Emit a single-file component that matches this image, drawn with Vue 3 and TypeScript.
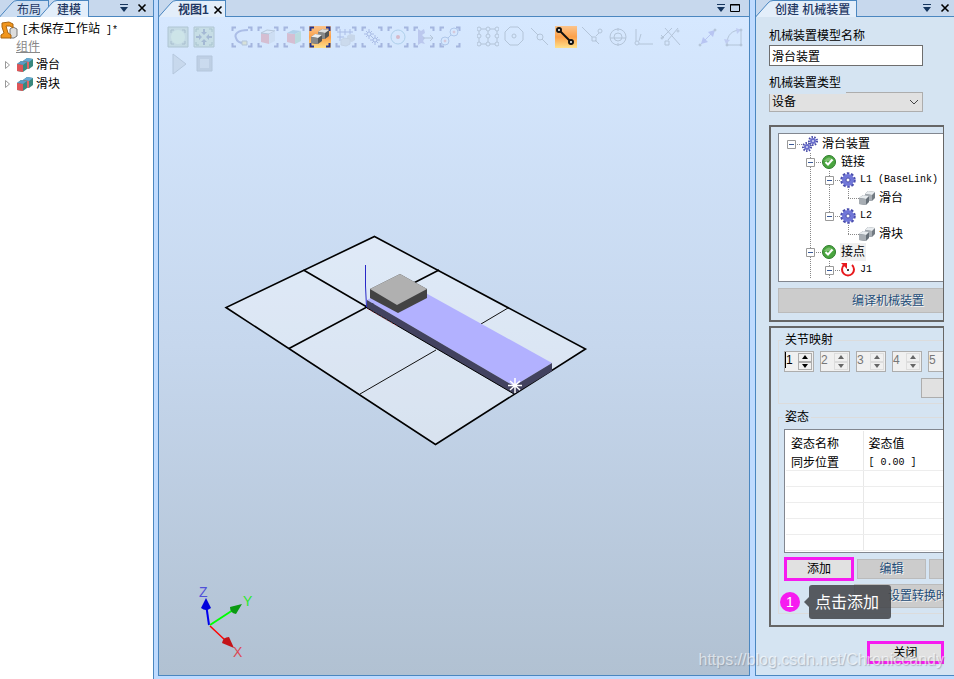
<script setup lang="ts">
import { ref } from 'vue'

interface Shape { d: string; fill?: string; stroke?: string; w?: number }
interface Tool { name: string; shapes: Shape[]; active?: boolean; corners?: boolean }
interface TreeRow { label: string; latin?: boolean; level: number; icon: string; leaf?: boolean; guides: number[]; last?: boolean; selected?: boolean }

const ring = (x: number, y: number, r: number): string =>
  `M${x - r} ${y}a${r} ${r} 0 1 0 ${r * 2} 0a${r} ${r} 0 1 0 ${-r * 2} 0`

const spokes = (x: number, y: number): string =>
  `M${x} ${y - 5}V${y - 2}M${x} ${y + 2}V${y + 5}M${x - 5} ${y}H${x - 2}M${x + 2} ${y}H${x + 5}` +
  `M${x - 3} ${y - 3}L${x - 1} ${y - 1}M${x + 1} ${y + 1}L${x + 3} ${y + 3}M${x + 3} ${y - 3}L${x + 1} ${y - 1}M${x - 1} ${y + 1}L${x - 3} ${y + 3}`

const corners = 'M1.5 5V1.5H5M17 1.5H20.5V5M20.5 17V20.5H17M5 20.5H1.5V17'
const navy = '#3c4fa8'
const grey = '#5d6b78'

const cubes: Shape[] = [
  { d: 'M9 6L13 3L20 4V10L16 13L9 12Z', fill: '#555' },
  { d: 'M9 6L13 3L20 4L16 7Z', fill: '#ddd' },
  { d: 'M9 6L16 7V13L9 12Z', fill: '#888' },
  { d: 'M2 11L6 8L13 9V15L9 18L2 17Z', fill: '#555' },
  { d: 'M2 11L6 8L13 9L9 12Z', fill: '#eee' },
  { d: 'M2 11L9 12V18L2 17Z', fill: '#888' },
]

const toolGroups: Tool[][] = [
  [
    { name: '全部显示', shapes: [{ d: 'M1 1H21V21H1Z', fill: '#98b8a0', stroke: '#4d6c64' }, { d: ring(11, 11, 7), fill: '#b8dfb0' }, { d: 'M4 7V4H7M15 4H18V7M18 15V18H15M7 18H4V15', stroke: '#355' }] },
    { name: '居中', shapes: [{ d: 'M1 1H21V21H1Z', fill: '#a0c4a4', stroke: '#4d6c64' }, { d: 'M11 3V7M11 15V19M3 11H7M15 11H19', stroke: '#233f66', w: 2 }, { d: 'M8 6H14L11 9ZM8 16H14L11 13ZM6 8V14L9 11ZM16 8V14L13 11Z', fill: '#233f66' }, { d: 'M3 6V3H6M16 3H19V6M19 16V19H16M6 19H3V16', stroke: '#365' }] },
  ],
  [
    { name: '选择曲线', corners: true, shapes: [{ d: 'M17 4C7 4 3 8 5 12C6 16 9 17 13 17', stroke: navy, w: 2 }, { d: 'M11 15H16V19H11Z', fill: '#ddd27a', stroke: grey }] },
    { name: '选择表面', corners: true, shapes: [{ d: 'M4 7L12 8V18L4 16Z', fill: '#d6545e' }, { d: 'M4 7L10 4L18 5L12 8Z', fill: '#e4e9ef', stroke: grey }, { d: 'M12 8L18 5V15L12 18Z', fill: '#b9c7d8' }] },
    { name: '选择物体', corners: true, shapes: [{ d: 'M4 7L12 8V18L4 16Z', fill: '#d6545e' }, { d: 'M4 7L10 4L18 5L12 8Z', fill: '#4e94b6' }, { d: 'M12 8L18 5V15L12 18Z', fill: '#71bc92' }] },
    { name: '选择部件', corners: true, active: true, shapes: cubes },
    { name: '选择组', corners: true, shapes: [{ d: 'M5 3V15M10 3V9M15 3V8M2 6H18M2 11H9', stroke: navy }, { d: 'M12 10L15 8L20 9V14L17 16L12 15Z', fill: '#a3aab2' }, { d: 'M6 14L9 12L15 13V18L11 20L6 19Z', fill: '#b4bbc2', stroke: '#98a0a8' }] },
    { name: '选择机械装置', corners: true, shapes: [{ d: spokes(8, 8) + ring(8, 8, 2), stroke: navy }, { d: spokes(14, 14) + ring(14, 14, 2), stroke: navy }] },
    { name: '目标选择', corners: true, shapes: [{ d: ring(11, 11, 7), stroke: '#4992b7' }, { d: ring(11, 11, 2), fill: '#dc4040' }] },
    { name: '移动选择', corners: true, shapes: [{ d: 'M5 3L8 5L11 3L12 7L9 9L12 12L10 15L12 18L8 17L5 19Z', fill: '#7778c4' }, { d: 'M10 12H20M17 9L20 12L17 15', stroke: grey }] },
    { name: '路径选择', corners: true, shapes: [{ d: ring(15, 6, 4) + ring(6, 15, 4) + 'M9 12L12 9', stroke: '#4b74b7' }, { d: ring(15, 6, 1) + ring(6, 15, 1), fill: '#dc4040', stroke: '#dc8080' }] },
  ],
  [
    { name: '捕捉对象', shapes: [{ d: ring(2, 3, 2) + ring(11, 3, 2) + ring(20, 3, 2) + ring(2, 10, 2) + ring(11, 10, 2) + ring(20, 10, 2) + ring(2, 18, 2) + ring(11, 18, 2) + ring(20, 18, 2), stroke: grey }, { d: 'M4 3H9M13 3H18M4 18H9M13 18H18M2 5V8M2 12V16M11 5V8M11 12V16M20 5V8M20 12V16', stroke: grey }] },
    { name: '捕捉中心', shapes: [{ d: 'M7 1H15L20 6V14L15 19H7L2 14V6Z', stroke: grey }, { d: ring(11, 10, 2), stroke: grey }] },
    { name: '捕捉中点', shapes: [{ d: 'M2 2L9 9M13 13L19 19', stroke: grey }, { d: ring(11, 11, 3), stroke: grey }] },
    { name: '捕捉末端', active: true, shapes: [{ d: 'M5 5L16 16', stroke: '#111', w: 2 }, { d: ring(4, 4, 2) + ring(16, 16, 2), fill: '#fff', stroke: '#111', w: 2 }] },
    { name: '捕捉边缘', shapes: [{ d: 'M1 1L11 11M14 14L18 18M15 10L18 7', stroke: grey }, { d: 'M11 11H15V15H11Z' + ring(19, 5, 2), stroke: grey }] },
    { name: '捕捉重心', shapes: [{ d: ring(11, 11, 8), stroke: grey }, { d: ring(11, 11, 4) + 'M3 12H19M11 2V5M11 17V20', stroke: grey }] },
    { name: '捕捉本地原点', shapes: [{ d: 'M3 3V15M6 18H20M6 15L8 8', stroke: grey }, { d: ring(4, 17, 2), stroke: grey }] },
    { name: '捕捉网格', shapes: [{ d: 'M6 2L21 19M19 2L9 14M2 13L13 2M2 9L5 12', stroke: grey }, { d: 'M6 15H10V19H6Z' + ring(19, 5, 1) + ring(3, 12, 1), stroke: grey }] },
  ],
  [
    { name: '点到点', shapes: [{ d: 'M4 18L18 4', stroke: '#6b6bd5' }, { d: 'M18 4L11 6L16 11ZM4 18L6 11L11 16Z', fill: '#6b6bd5' }, { d: ring(3, 19, 1) + ring(18, 4, 1), fill: grey, stroke: grey }] },
    { name: '角度', shapes: [{ d: 'M4 18C4 9 9 4 18 4V19H4', stroke: grey }, { d: 'M18 4L13 2L14 8ZM3 18L1 13L7 14Z', fill: '#8b8bd5' }, { d: ring(18, 4, 1) + ring(18, 19, 1) + ring(4, 19, 1), fill: grey, stroke: grey }] },
  ],
]

const tree: TreeRow[] = [
  { label: '滑台装置', level: 0, icon: 'gears', guides: [] },
  { label: '链接', level: 1, icon: 'check', guides: [] },
  { label: 'L1 (BaseLink)', latin: true, level: 2, icon: 'gear', guides: [1] },
  { label: '滑台', level: 3, icon: 'part', leaf: true, last: true, guides: [1, 2] },
  { label: 'L2', latin: true, level: 2, icon: 'gear', last: true, guides: [1] },
  { label: '滑块', level: 3, icon: 'part', leaf: true, last: true, guides: [1] },
  { label: '接点', level: 1, icon: 'check', guides: [], selected: true },
  { label: 'J1', latin: true, level: 2, icon: 'joint', guides: [1] },
]

const parts = ['滑台', '滑块']
const modelName = ref('滑台装置')
const modelType = ref('设备')
const joints = ref([1, 2, 3, 4, 5])
const emptyRows = 5
</script>

<template>
  <div class="app">
    <aside class="pane left">
      <header class="strip">
        <button class="tab">
          <svg class="slope" viewBox="0 0 17 17"><path class="face" d="M0 17L12 3Q14 1 17 1V17Z" /><path class="edge" d="M0 16.500L12 3Q14 .5 17 .5" /></svg>
          <span>布局</span>
        </button>
        <button class="tab on overlap">
          <svg class="slope" viewBox="0 0 17 17"><path class="face" d="M0 17L12 3Q14 1 17 1V17Z" /><path class="edge" d="M0 16.500L12 3Q14 .5 17 .5" /></svg>
          <span>建模</span>
        </button>
        <i class="fill"></i>
        <button class="ctl" aria-label="菜单"><svg viewBox="0 0 10 10"><path d="M1 1.500H9" stroke="#17365d" /><path d="M1 4H9L5 9Z" fill="#17365d" /></svg></button>
        <button class="ctl" aria-label="关闭面板"><svg viewBox="0 0 10 10"><path d="M1.500 1.500L8.500 8.500M8.500 1.500L1.500 8.500" stroke="#000" stroke-width="1.600" /></svg></button>
      </header>
      <div class="station">
        <svg class="robot" viewBox="0 0 18 18"><path d="M10 8L13 6L17 8V15L14 17H10Z" fill="#ddd" stroke="#777" /><path d="M2 2L9 1L13 3L13 7L10 5L6 5L8 12L11 14V17H1V14L4 12L2 6Z" fill="#f2961d" stroke="#a96510" /></svg>
        <span><b class="mono">[</b>未保存工作站<b class="mono"> ]*</b></span>
      </div>
      <div class="group">组件</div>
      <ul class="parts">
        <li v-for="p in parts" :key="p">
          <svg class="caret" viewBox="0 0 8 10"><path d="M1.500 1.500L5.500 5L1.500 8.500Z" fill="#fff" stroke="#999" /></svg>
          <svg class="cube" viewBox="0 0 18 16">
            <path d="M7 4L11 1L17 2V9L13 12L7 11Z" fill="#39887e" /><path d="M7 4L11 1L17 2L13 5Z" fill="#67a8d5" /><path d="M7 4L13 5V12L7 11Z" fill="#df6668" />
            <path d="M1 7L5 4L11 5V12L7 15L1 14Z" fill="#39887e" /><path d="M1 7L5 4L11 5L7 8Z" fill="#5d9ac5" /><path d="M1 7L7 8V15L1 14Z" fill="#df5558" />
          </svg>
          <span>{{ p }}</span>
        </li>
      </ul>
    </aside>

    <main class="pane center">
      <header class="strip">
        <button class="tab on bold">
          <svg class="slope" viewBox="0 0 17 17"><path class="face" d="M0 17L12 3Q14 1 17 1V17Z" /><path class="edge" d="M0 16.500L12 3Q14 .5 17 .5" /></svg>
          <span>视图1 <svg class="x" viewBox="0 0 10 10"><path d="M1.500 1.500L8.500 8.500M8.500 1.500L1.500 8.500" stroke="#000" stroke-width="1.600" /></svg></span>
        </button>
        <i class="fill"></i>
        <button class="ctl near" aria-label="菜单"><svg viewBox="0 0 10 10"><path d="M1 1.500H9" stroke="#17365d" /><path d="M1 4H9L5 9Z" fill="#17365d" /></svg></button>
        <button class="ctl" aria-label="最大化"><svg viewBox="0 0 10 10"><path d="M.5 1.500H9.500V8.500H.5ZM0 2H10" fill="none" stroke="#000" /></svg></button>
      </header>
      <div class="view">
        <svg class="scene" viewBox="159 17 590 658" preserveAspectRatio="xMinYMin meet">
          <path d="M374.500 236.500L585.500 349L435.500 444.500L226 307.500Z" fill="#fff" fill-opacity=".38" stroke="#000" stroke-width="1.600" />
          <path d="M303.500 270L367 307L289 348.500M439 270L367 307" fill="none" stroke="#000" stroke-width="1.600" />
          <path d="M508 308L481 324M436 350L360 394" stroke="#111" />
          <path d="M367 300L404 281L552 363L514 386Z" fill="#b2b1ff" />
          <path d="M367 300L514 386L552 363V371L514 394L367 308Z" fill="#42425f" />
          <path d="M367 308L514 394" stroke="#000" />
          <path d="M368 309L397 326" stroke="#d35b68" stroke-dasharray="1 2" />
          <path d="M370 289L400 274L427 289V298L398 313L370 298Z" fill="#434343" />
          <path d="M370 289L400 274L427 289L397 305Z" fill="#b0b0b0" />
          <path d="M365.500 265V286L366.500 307" stroke="#2828c8" fill="none" />
          <path d="M515 378V393M508 385.500H522M510 381L520 390M520 381L510 390" stroke="#fff" stroke-width="1.500" />
          <path d="M209 625L206 604" stroke="#00e" stroke-width="2" /><path d="M206 598L201 608Q206 612 211 608Z" fill="#0000dc" />
          <path d="M210 625L233 610" stroke="#0f0" stroke-width="2" /><path d="M242 604L230 607Q230 613 236 614Z" fill="#0a9a12" />
          <path d="M210 626L226 641" stroke="#f00" stroke-width="1.500" /><path d="M234 648L222 643Q223 637 229 637Z" fill="#c41318" />
          <text x="199" y="597" fill="#5050d8">Z</text><text x="243" y="606" fill="#2ce82c">Y</text><text x="233" y="657" fill="#dc4a55">X</text>
        </svg>
        <div class="tools">
          <div class="toolrow">
            <div v-for="(g, i) in toolGroups" :key="i" class="toolgroup">
              <button v-for="t in g" :key="t.name" class="tool" :class="{ active: t.active }" :aria-label="t.name">
                <svg viewBox="0 0 22 22">
                  <path v-if="t.corners" :d="corners" fill="none" stroke="#26368e" stroke-width="2" />
                  <path v-for="(s, k) in t.shapes" :key="k" :d="s.d" :fill="s.fill ?? 'none'" :stroke="s.stroke ?? 'none'" :stroke-width="s.w ?? 1" />
                </svg>
              </button>
            </div>
          </div>
          <div class="toolrow">
            <div class="toolgroup">
              <button class="tool" aria-label="播放"><svg viewBox="0 0 22 22"><path d="M6 1L19 11L6 21Z" fill="#a9b8c6" stroke="#66788a" /></svg></button>
              <button class="tool" aria-label="停止"><svg viewBox="0 0 22 22"><path d="M4 3H19V18H4Z" fill="#8495a6" stroke="#66788a" /><path d="M7 6H16V15H7Z" fill="#b3bfca" /></svg></button>
            </div>
          </div>
        </div>
      </div>
    </main>

    <aside class="pane right">
      <header class="strip">
        <button class="tab on create">
          <svg class="slope" viewBox="0 0 17 17"><path class="face" d="M0 17L12 3Q14 1 17 1V17Z" /><path class="edge" d="M0 16.500L12 3Q14 .5 17 .5" /></svg>
          <span>创建 机械装置</span>
        </button>
        <i class="fill"></i>
        <button class="ctl" aria-label="菜单"><svg viewBox="0 0 10 10"><path d="M1 1.500H9" stroke="#17365d" /><path d="M1 4H9L5 9Z" fill="#17365d" /></svg></button>
        <button class="ctl" aria-label="关闭面板"><svg viewBox="0 0 10 10"><path d="M1.500 1.500L8.500 8.500M8.500 1.500L1.500 8.500" stroke="#000" stroke-width="1.600" /></svg></button>
      </header>
      <div class="form">
        <label for="model-name">机械装置模型名称</label>
        <input id="model-name" v-model="modelName" class="field" type="text">
        <label for="model-type" class="second">机械装置类型</label>
        <div class="selectbox">
          <select id="model-type" v-model="modelType" class="field"><option>设备</option></select>
          <svg viewBox="0 0 10 6"><path d="M1 1L5 5L9 1" fill="none" stroke="#444" /></svg>
        </div>

        <section class="box">
          <div class="tree">
            <div v-for="r in tree" :key="r.level + r.label + r.icon" class="node">
              <svg :width="r.level * 19 + 20" height="18" class="lines">
                <g stroke="#888" stroke-dasharray="1 1">
                  <path v-for="n in r.guides" :key="n" :d="`M${n * 19 + 9.5} 0V18`" />
                  <path v-if="r.level" :d="`M${r.level * 19 + 9.5} 0V${r.last ? 9 : 18}`" />
                  <path :d="`M${r.level * 19 + 9} 9.5H${r.level * 19 + 20}`" />
                </g>
                <g v-if="!r.leaf" :transform="`translate(${r.level * 19 + 5} 5)`">
                  <path d="M.5 .5H8.500V8.500H.5Z" fill="#fff" stroke="#999" /><path d="M2 4.500H7" stroke="#3a5a98" />
                </g>
              </svg>
              <svg class="ico" viewBox="0 0 16 16">
                <template v-if="r.icon === 'check'">
                  <circle cx="8" cy="8" r="6.500" fill="#4aa53f" stroke="#2f7d2c" /><path d="M3 7Q8 0 13 7Z" fill="#7cc06e" /><path d="M4.500 8L7 10.500L11.500 5.500" fill="none" stroke="#fff" stroke-width="2" />
                </template>
                <template v-else-if="r.icon === 'gear'">
                  <circle cx="8" cy="8" r="6.500" fill="none" stroke="#4a4eae" stroke-width="2.500" stroke-dasharray="2.500 1.600" /><circle cx="8" cy="8" r="4" fill="#fff" stroke="#7177d8" stroke-width="4" /><circle cx="8" cy="8" r="2" fill="#fff" stroke="#474ba8" />
                </template>
                <template v-else-if="r.icon === 'gears'">
                  <g fill="none" stroke="#474ba8" stroke-width="2" stroke-dasharray="1.500 1.300"><circle cx="11" cy="5" r="4" /><circle cx="5" cy="11" r="4" /></g>
                  <g fill="#d9dbf5" stroke="#6a6ecb" stroke-width="2"><circle cx="11" cy="5" r="2" /><circle cx="5" cy="11" r="2" /></g>
                </template>
                <template v-else-if="r.icon === 'part'">
                  <path d="M6 4L9 1L16 2V8L13 11L6 10Z" fill="#737b83" /><path d="M6 4L9 1L16 2L13 5Z" fill="#e8ecef" /><path d="M6 4L13 5V11L6 10Z" fill="#a7adb3" /><path d="M0 8L4 5L10 6V12L7 15L0 14Z" fill="#677078" /><path d="M0 8L4 5L10 6L7 9Z" fill="#e8ecef" /><path d="M0 8L7 9V15L0 14Z" fill="#a7adb3" />
                </template>
                <template v-else>
                  <path d="M4 3A6 6 0 1 0 12 3" fill="none" stroke="#e8191c" stroke-width="2" /><path d="M1 1H7V7Z" fill="#e8191c" /><circle cx="8" cy="8" r="1" fill="#000" />
                </template>
              </svg>
              <span :class="{ mono: r.latin, selected: r.selected }">{{ r.label }}</span>
            </div>
          </div>
          <button class="btn off compile" disabled>编译机械装置</button>
        </section>

        <section class="box lower">
          <fieldset>
            <legend>关节映射</legend>
            <div class="spins">
              <div v-for="(j, i) in joints" :key="i" class="spin" :class="{ live: i === 0 }">
                <input v-model="joints[i]" type="number" :disabled="i > 0" :aria-label="`关节 ${j}`">
                <span class="arrows">
                  <button :disabled="i > 0" aria-label="增加"><svg viewBox="0 0 6 4"><path d="M0 4L3 0L6 4Z" /></svg></button>
                  <button :disabled="i > 0" aria-label="减少"><svg viewBox="0 0 6 4"><path d="M0 0L3 4L6 0Z" /></svg></button>
                </span>
              </div>
            </div>
            <button class="btn map" aria-label="设置"></button>
          </fieldset>
          <fieldset class="poses">
            <legend>姿态</legend>
            <div class="tablebox">
              <table>
                <thead><tr><th>姿态名称</th><th>姿态值</th></tr></thead>
                <tbody>
                  <tr class="data"><td>同步位置</td><td class="mono">[ 0.00 ]</td></tr>
                  <tr v-for="n in emptyRows" :key="n"><td></td><td></td></tr>
                </tbody>
              </table>
            </div>
            <div class="actions">
              <button class="btn marked add">添加</button>
              <button class="btn off edit" disabled>编辑</button>
              <button class="btn off edit" disabled aria-label="删除"></button>
            </div>
            <button class="btn off times" disabled>设置转换时</button>
            <div class="callout"><b>1</b><span>点击添加</span></div>
          </fieldset>
        </section>
        <button class="btn marked close">关闭</button>
      </div>
    </aside>
    <div class="watermark">https://blog.csdn.net/Chroniccandy</div>
  </div>
</template>

<style>
body { margin: 0; background: #bfdbff; }
</style>

<style scoped>
* { box-sizing: border-box; }
.app {
  display: grid;
  grid-template-columns: 154px minmax(0, 1fr) 199px;
  column-gap: 4px;
  min-height: 100vh;
  position: relative;
  overflow: hidden;
  background: #bfdbff;
  color: #000;
  font: 12px/18px "Liberation Sans", "Noto Sans CJK SC", sans-serif;
}
button, input, select { font: inherit; color: inherit; margin: 0; padding: 0; border-radius: 0; }
.mono { font: 10px/18px "Liberation Mono", monospace; white-space: pre; }
.pane { display: flex; flex-direction: column; min-width: 0; }
.left { background: #fff; border-right: 1px solid #4b87c0; }
.center { border: 1px solid #4b87c0; border-top: 0; margin-bottom: 3px; margin-right: 1px; }
.right { background: #d5e4f2; border-left: 1px solid #4b87c0; border-bottom: 1px solid #4b87c0; margin-bottom: 3px; }

.strip { display: flex; height: 17px; flex: none; background: linear-gradient(#4b87c0, #4b87c0) 0 100% / 100% 1px no-repeat #c7d8ed; }
.fill { flex: 1; }
.tab { display: flex; border: 0; background: none; height: 17px; color: #1f3864; line-height: 18px; --face: #cddef2; }
.tab.on { --face: #e3eefa; font-weight: 500; }
.tab.bold { font-weight: 700; }
.tab > span { background: var(--face); border-top: 1px solid #4b87c0; border-right: 1px solid #4b87c0; height: 17px; padding-right: 7px; white-space: nowrap; }
.tab:not(.on) > span { height: 16px; }
.tab.overlap { margin-left: -9px; }
.slope { width: 17px; height: 17px; flex: none; }
.face { fill: var(--face); }
.edge { fill: none; stroke: #4b87c0; }
.x { width: 10px; height: 10px; margin: 0 -6px 0 1px; vertical-align: -1px; }
.center .tab > span { padding: 0 8px 0 2px; }
.right .tab > span { padding: 0 6px 0 2px; }
.ctl { width: 18px; height: 16px; border: 0; background: none; display: grid; place-items: center; }
.ctl.near { margin-right: -4px; }
.center .ctl:last-child { margin-right: 5px; }
.left .ctl:last-child { margin-right: 2px; }
.ctl svg { width: 10px; height: 10px; }

.station { display: flex; align-items: center; gap: 4px; height: 20px; margin-top: 3px; white-space: nowrap; }
.robot { width: 18px; height: 18px; }
.station b { font-weight: 400; }
.group { padding-left: 16px; height: 15px; line-height: 15px; color: #888; text-decoration: underline; }
.parts { list-style: none; margin: 0; padding: 0; }
.parts li { display: flex; align-items: center; height: 19px; padding-left: 4px; }
.caret { width: 8px; height: 10px; margin-right: 4px; }
.cube { width: 18px; height: 16px; margin-right: 2px; }

.view { flex: 1; display: grid; background: linear-gradient(#d6e8ff, #c6d7ed 50%, #b1c1d2); }
.scene, .tools { grid-area: 1 / 1; }
.scene { width: 100%; height: 100%; display: block; }
.scene text { font: 14px "Liberation Sans", sans-serif; }
.tools { display: flex; flex-direction: column; gap: 5px; padding: 9px 0 0 8px; align-self: start; }
.toolrow { display: flex; gap: 16px; }
.toolgroup { display: flex; gap: 4px; }
.tool { width: 22px; height: 22px; border: 0; background: none; }
.tool svg { width: 22px; height: 22px; display: block; opacity: .27; }
.tool.active { background: linear-gradient(#fbc48c, #fba04a 50%, #fee08a); }
.tool.active svg { opacity: 1; }

.form { display: flex; flex-direction: column; align-items: flex-start; padding: 9px 10px 11px 13px; }
.form > label { display: block; height: 18px; line-height: 20px; margin-bottom: 1px; }
.field { width: 154px; height: 21px; border: 1px solid #6e6e6e; background: #fff; padding: 0 2px; display: block; }
.form > .second { position: relative; background: #d5e4f2; height: 21px; width: 77px; margin: 7px 0 -2px; }
.selectbox { display: grid; align-items: center; margin-bottom: 13px; }
.selectbox > * { grid-area: 1 / 1; }
.selectbox select { appearance: none; height: 20px; background: #e1e1e1; border-color: #adadad; }
.selectbox svg { width: 10px; height: 6px; justify-self: end; margin-right: 4px; pointer-events: none; }

.box { align-self: stretch; border: 2px solid #666; border-right-width: 1px; overflow: hidden; padding: 6px 0 7px 7px; margin-bottom: 4px; }
.tree { width: 220px; height: 149px; overflow: hidden; border: 1px solid #828790; background: #fff; padding: 1px 3px; }
.node { display: flex; align-items: center; height: 18px; white-space: nowrap; }
.lines { flex: none; }
.ico { width: 16px; height: 16px; flex: none; margin-right: 3px; }
.node span { line-height: 18px; padding: 0 1px; }
.selected { background: #f0f0f0; }

.btn { display: block; background: #e1e1e1; border: 1px solid #adadad; text-align: center; white-space: nowrap; line-height: 16px; }
.btn.off { background: #ccc; border-color: #bbb; color: #1f4e79; text-shadow: 1px 1px #f4f4f4; }
.btn.marked { border: 3px solid #f61bf0; }
.compile { width: 220px; height: 25px; margin-top: 6px; }

.lower { padding: 2px 0 11px 7px; margin-bottom: 14px; }
fieldset { width: 230px; border: 1px solid #dcdcdc; margin: 0 0 3px; padding: 1px 0 5px 5px; }
legend { line-height: 20px; padding: 0 2px; margin-left: -1px; }
.spins { display: flex; gap: 6px; }
.spin { display: flex; width: 30px; height: 21px; flex: none; border: 1px solid #adadad; background: #f0f0f0; color: #777; }
.spin input { width: 13px; height: 16px; border: 0; background: none; outline: 0; appearance: textfield; font: 12px/16px "Liberation Sans", sans-serif; }
.spin input::-webkit-inner-spin-button { appearance: none; display: none; }
.spin.live { color: #000; }
.spin.live input { border-left: 1px solid #000; }
.arrows { display: flex; flex-direction: column; width: 14px; padding: 1px 0; }
.arrows button { flex: 1; display: grid; place-items: center; border: 1px solid #ddd; background: #f0f0f0; min-height: 0; }
.live .arrows button { border-color: #adadad; }
.arrows svg { width: 6px; height: 4px; fill: #666; }
.live .arrows svg { fill: #000; }
.map { width: 68px; height: 20px; margin: 6px 0 0 137px; }

.poses { position: relative; margin: 0; padding-top: 2px; }
.tablebox { width: 220px; height: 124px; border: 1px solid #828790; background: #fff; padding: 1px; overflow: hidden; }
table { border-collapse: collapse; table-layout: fixed; width: 216px; }
th { font-weight: 400; text-align: left; height: 24px; padding: 2px 5px 0; }
th:first-child { width: 77px; }
th:first-child, td:first-child { border-right: 1px solid #e8e8e8; }
td { height: 16px; padding: 0 5px; border-bottom: 1px solid #ededed; }
.data td { height: 15px; line-height: 14px; padding-top: 1px; }
.actions { display: flex; gap: 3px; align-items: center; margin: 4px 0 3px; }
.add { width: 70px; height: 24px; }
.edit { width: 69px; height: 20px; }
.times { width: 140px; height: 24px; margin-left: 70px; text-align: left; padding-left: 33px; }
.callout { position: absolute; left: 1px; bottom: -6px; display: flex; align-items: center; gap: 9px; color: #fff; }
.callout b { width: 20px; height: 20px; border-radius: 50%; background: #f61bf0; font-weight: 400; line-height: 20px; text-align: center; font-size: 14px; }
.callout span { position: relative; background: rgba(64, 66, 70, .85); border-radius: 3px; width: 82px; height: 34px; padding-left: 6px; line-height: 36px; font-size: 16px; }
.callout span::before { content: ""; position: absolute; left: -5px; top: 12px; border: 5px solid transparent; border-left: 0; border-right-color: rgba(64, 66, 70, .85); }
.close { width: 77px; height: 23px; align-self: flex-end; }
.watermark { position: absolute; right: 10px; bottom: 9px; font: 16px/20px "Liberation Sans", sans-serif; color: rgba(255, 255, 255, .62); text-shadow: 1px 1px 1px rgba(110, 120, 130, .45); pointer-events: none; }
</style>
